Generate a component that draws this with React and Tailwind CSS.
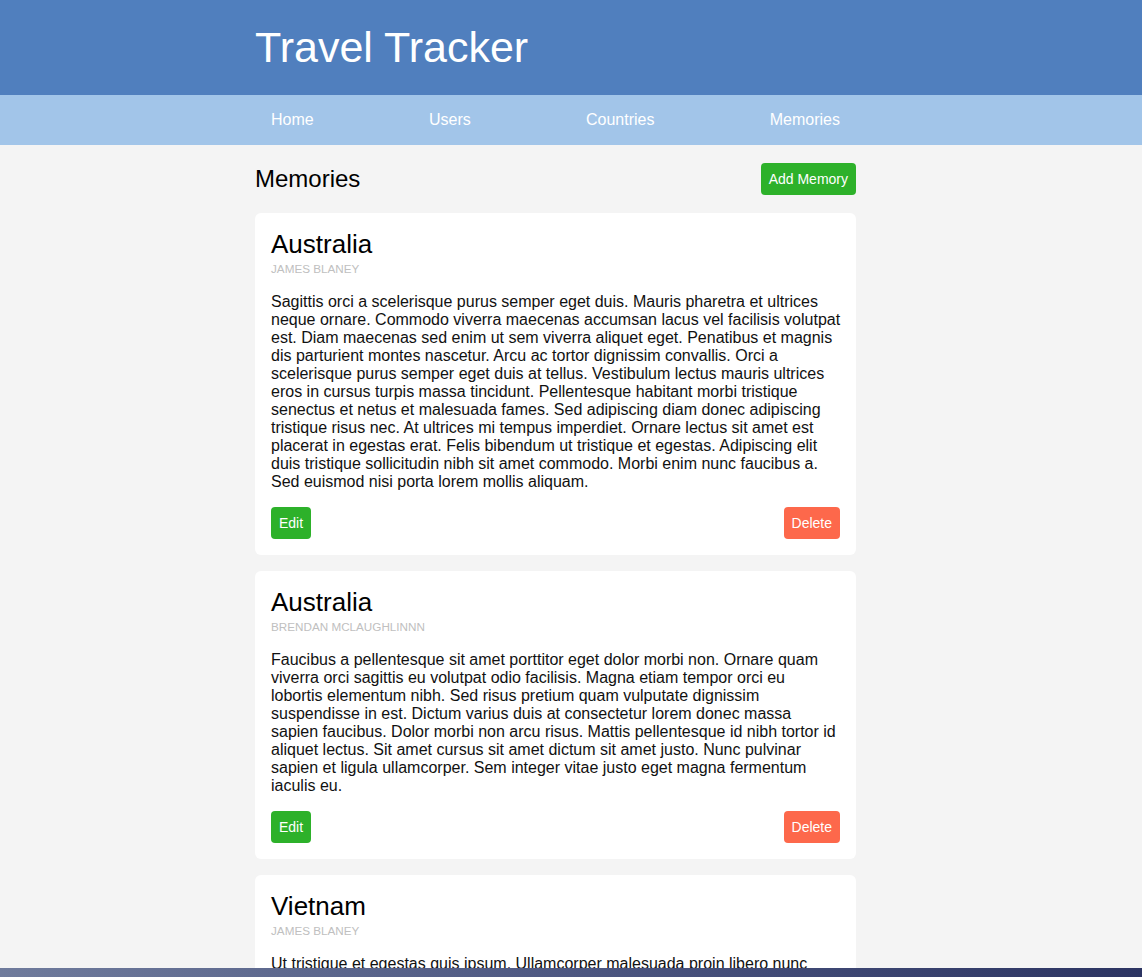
import React from 'react';

const NAV = ['Home', 'Users', 'Countries', 'Memories'];

const MEMORIES = [
  {
    id: 1,
    country: 'Australia',
    author: 'James Blaney',
    body:
      'Sagittis orci a scelerisque purus semper eget duis. Mauris pharetra et ultrices neque ornare. Commodo viverra maecenas accumsan lacus vel facilisis volutpat est. Diam maecenas sed enim ut sem viverra aliquet eget. Penatibus et magnis dis parturient montes nascetur. Arcu ac tortor dignissim convallis. Orci a scelerisque purus semper eget duis at tellus. Vestibulum lectus mauris ultrices eros in cursus turpis massa tincidunt. Pellentesque habitant morbi tristique senectus et netus et malesuada fames. Sed adipiscing diam donec adipiscing tristique risus nec. At ultrices mi tempus imperdiet. Ornare lectus sit amet est placerat in egestas erat. Felis bibendum ut tristique et egestas. Adipiscing elit duis tristique sollicitudin nibh sit amet commodo. Morbi enim nunc faucibus a. Sed euismod nisi porta lorem mollis aliquam.',
  },
  {
    id: 2,
    country: 'Australia',
    author: 'Brendan McLaughlinnn',
    body:
      'Faucibus a pellentesque sit amet porttitor eget dolor morbi non. Ornare quam viverra orci sagittis eu volutpat odio facilisis. Magna etiam tempor orci eu lobortis elementum nibh. Sed risus pretium quam vulputate dignissim suspendisse in est. Dictum varius duis at consectetur lorem donec massa sapien faucibus. Dolor morbi non arcu risus. Mattis pellentesque id nibh tortor id aliquet lectus. Sit amet cursus sit amet dictum sit amet justo. Nunc pulvinar sapien et ligula ullamcorper. Sem integer vitae justo eget magna fermentum iaculis eu.',
  },
  {
    id: 3,
    country: 'Vietnam',
    author: 'James Blaney',
    body:
      'Ut tristique et egestas quis ipsum. Ullamcorper malesuada proin libero nunc consequat interdum varius sit amet. Eget nunc lobortis mattis aliquam faucibus purus in massa tempor. Tellus in metus vulputate eu scelerisque felis imperdiet proin fermentum.',
  },
];

function MemoryCard({ memory }) {
  return (
    <div className="bg-white rounded-md px-4 pt-4 pb-4">
      <h2 className="text-[26px] leading-[30px] text-black">{memory.country}</h2>
      <div className="text-[11.7px] leading-[20px] uppercase text-[#c0c0c0]">{memory.author}</div>
      <p className="mt-[14px] -mr-[0.5px] text-[16px] leading-[18px] text-[#111]">{memory.body}</p>
      <div className="flex justify-between mt-4">
        <button className="h-8 px-2 rounded bg-[#2db12a] text-white text-[14px]">Edit</button>
        <button className="h-8 px-2 rounded bg-[#fd684b] text-white text-[14px]">Delete</button>
      </div>
    </div>
  );
}

export default function App() {
  return (
    <div className="min-h-screen bg-[#f4f4f4] font-['Liberation_Sans',Arial,sans-serif]">
      <header className="bg-[#507fbe] h-[95px]">
        <div className="ml-[255px] w-[601px] h-full flex items-center">
          <h1 className="text-[43px] leading-none text-white">Travel Tracker</h1>
        </div>
      </header>

      <nav className="bg-[#a2c5e9] h-[50px]">
        <div className="ml-[255px] w-[601px] h-full px-4 flex items-center justify-between">
          {NAV.map(item => (
            <a key={item} className="text-white text-[16px] leading-6">{item}</a>
          ))}
        </div>
      </nav>

      <main className="ml-[255px] w-[601px] pt-[18px] pb-10">
        <div className="flex items-center justify-between h-8 mb-[18px]">
          <h2 className="text-[24px] leading-8 text-black">Memories</h2>
          <button className="h-8 px-2 rounded bg-[#2db12a] text-white text-[14px]">Add Memory</button>
        </div>

        <div className="flex flex-col gap-4">
          {MEMORIES.map(m => (
            <MemoryCard key={m.id} memory={m} />
          ))}
        </div>
      </main>

      {/* os strip at the bottom edge */}
      <div className="fixed bottom-0 left-0 right-0 h-[9px] bg-linear-to-r from-[#6f7b9c] via-[#4d5781] to-[#2c3462]" />
    </div>
  );
}
